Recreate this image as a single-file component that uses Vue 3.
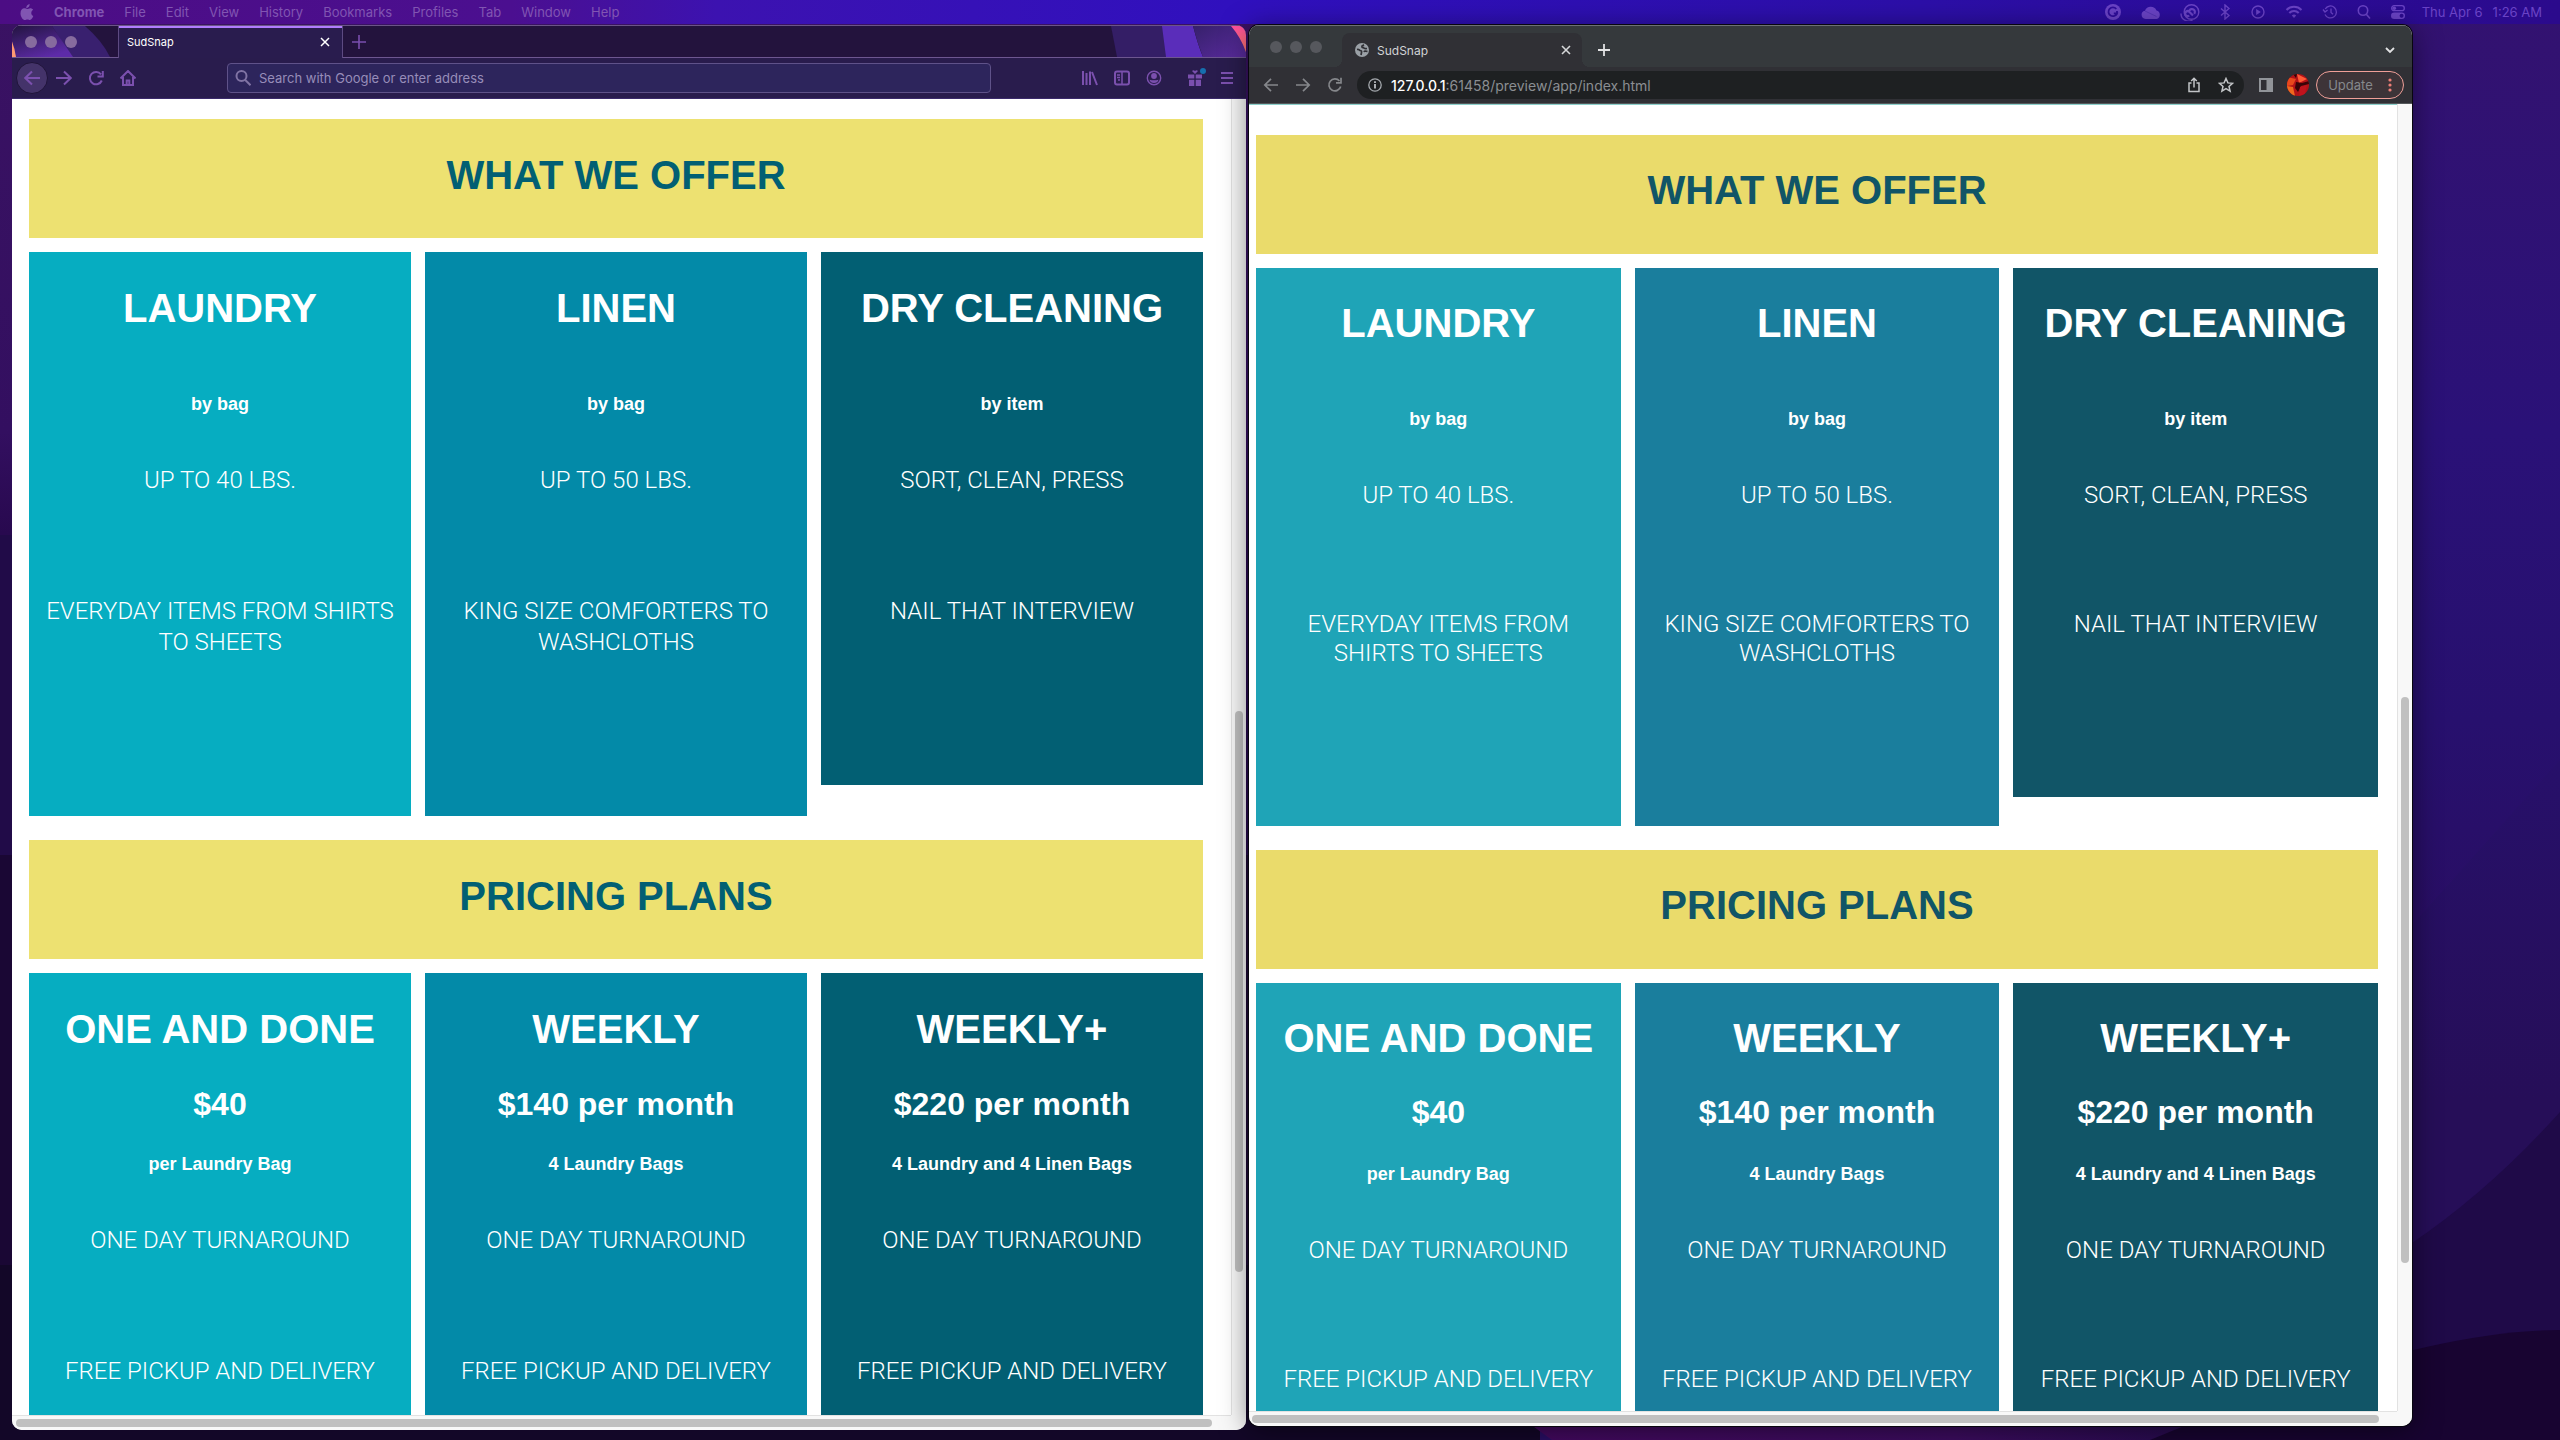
<script setup>
import { ref } from 'vue'

const menus = ['File', 'Edit', 'View', 'History', 'Bookmarks', 'Profiles', 'Tab', 'Window', 'Help']
const search = ref('')

const services = [
  { name: 'LAUNDRY', unit: 'by bag', lines: ['UP TO 40 LBS.', 'EVERYDAY ITEMS FROM SHIRTS TO SHEETS'] },
  { name: 'LINEN', unit: 'by bag', lines: ['UP TO 50 LBS.', 'KING SIZE COMFORTERS TO WASHCLOTHS'] },
  { name: 'DRY CLEANING', unit: 'by item', lines: ['SORT, CLEAN, PRESS', 'NAIL THAT INTERVIEW'] }
]

const plans = [
  { name: 'ONE AND DONE', price: '$40', unit: 'per Laundry Bag' },
  { name: 'WEEKLY', price: '$140 per month', unit: '4 Laundry Bags' },
  { name: 'WEEKLY+', price: '$220 per month', unit: '4 Laundry and 4 Linen Bags' }
].map((plan) => ({ ...plan, lines: ['ONE DAY TURNAROUND', 'FREE PICKUP AND DELIVERY'] }))

const sections = [
  { title: 'WHAT WE OFFER', cards: services },
  { title: 'PRICING PLANS', cards: plans }
]

// Scroll positions: share of the track before, under and after each thumb
const scroll = {
  firefox: { y: [612, 561, 143], x: [4, 1196, 19] },
  chrome: { y: [593, 566, 148], x: [3, 1127, 18] }
}
</script>

<template>
  <div class="desktop">
    <svg class="wallpaper" viewBox="0 0 2560 1440" preserveAspectRatio="none" aria-hidden="true">
      <defs>
        <linearGradient id="wp-left" x1="0" y1="0" x2="0" y2="1">
          <stop offset="0" stop-color="#3a1263" />
          <stop offset=".3" stop-color="#330f60" />
          <stop offset=".37" stop-color="#28094f" />
          <stop offset="1" stop-color="#1d0a46" />
        </linearGradient>
        <linearGradient id="wp-right" x1="0" y1="0" x2="0" y2="1">
          <stop offset="0" stop-color="#331270" />
          <stop offset=".3" stop-color="#2a1178" />
          <stop offset=".5" stop-color="#27106e" />
          <stop offset=".65" stop-color="#290e64" />
        </linearGradient>
        <linearGradient id="wp-hill" x1="0" y1="0" x2="0" y2="1">
          <stop offset="0" stop-color="#27106a" />
          <stop offset=".5" stop-color="#260e58" />
          <stop offset="1" stop-color="#260e58" />
        </linearGradient>
        <linearGradient id="wp-floor" x1="0" y1="0" x2="1" y2="0">
          <stop offset="0" stop-color="#43095f" />
          <stop offset=".6" stop-color="#3c0c5f" />
          <stop offset="1" stop-color="#230b4c" />
        </linearGradient>
      </defs>
      <rect width="1300" height="1440" fill="url(#wp-left)" />
      <rect x="1300" width="1260" height="1440" fill="url(#wp-right)" />
      <path d="M0 535h20v905H0z" fill="#210b48" />
      <path d="M0 855h1300v585H0z" fill="#1a0734" />
      <path d="M0 1265h1540v175H0z" fill="#130728" />
      <path d="M2300 975L2412 925 2560 760V1440H2300z" fill="url(#wp-hill)" />
      <path d="M2300 1290L2412 1243Q2490 1190 2560 1112V1440H2300z" fill="#1f0a48" />
      <path d="M1530 1424H2240L2180 1440H1552z" fill="url(#wp-floor)" />
      <path d="M2150 1440Q2412 1330 2560 1330V1440z" fill="#180431" />
    </svg>

    <header class="menubar">
      <nav class="menus" aria-label="Menu bar">
        <button class="apple" aria-label="Apple">
          <svg viewBox="0 0 14 17" width="14" height="17"><path fill="currentColor" d="M9.6 0c.1 1.3-.4 2.3-1 3-.7.8-1.500 1.200-2.300 1.100C6.200 2.900 6.700 2 7.300 1.300 7.900.6 8.800.1 9.600 0zM13.300 12.100c-.5 1.200-1.900 4-3.400 4-.9 0-1.400-.6-2.500-.6s-1.600.6-2.500.6C3.300 16.200.5 13.100.5 9.200.5 6 2.400 4.300 4.300 4.300c1.200 0 2.100.7 2.900.7.700 0 1.800-.8 3.200-.8.900 0 2 .5 2.700 1.500-2.600 1.600-2.200 5.300.2 6.400z" /></svg>
        </button>
        <button class="app-name">Chrome</button>
        <button v-for="menu in menus" :key="menu">{{ menu }}</button>
      </nav>
      <div class="status">
        <div class="status-icons">
          <svg viewBox="0 0 18 18" width="18" height="18"><circle cx="9" cy="9" r="8" fill="currentColor" /><path d="M12.300 6A4.400 4.400 0 1 0 13 10.400H9.800M13 8v3.500" fill="none" stroke="#2f0d9b" stroke-width="1.800" /></svg>
          <svg viewBox="0 0 20 16" width="20" height="16"><path fill="currentColor" d="M4.500 15a4.200 4.200 0 0 1-.6-8.300A6.300 6.300 0 0 1 15.500 6.500 4.400 4.400 0 0 1 15.600 15z" /><path d="M4 7l11.500 5.500" stroke="#5534b6" /></svg>
          <svg viewBox="0 0 20 17" width="20" height="17" fill="none" stroke="currentColor"><circle cx="11.500" cy="8" r="7.300" stroke-width="1.400" /><path d="M12.500 16A7.500 7.500 0 0 1 1 9.500" stroke-width="1.400" /><path d="M13 11.500L9.500 8a2.500 2.500 0 0 0-3.700 3.400 2.500 2.500 0 0 0 3.400.1M9.500 6.500a2.900 2.900 0 0 1 4.200-.8 2.900 2.900 0 0 1 .5 4.200" stroke-width="2.200" /></svg>
          <svg viewBox="0 0 12 16" width="12" height="16" fill="none" stroke="currentColor" stroke-width="1.400"><path d="M2 4.500l8 7L6 15V1l4 3.500-8 7" /></svg>
          <svg viewBox="0 0 16 16" width="16" height="16"><circle cx="8" cy="8" r="6" fill="none" stroke="currentColor" stroke-width="1.400" /><path d="M6.200 5v6l4.600-3z" fill="currentColor" /></svg>
          <svg viewBox="0 0 18 14" width="18" height="14" fill="none" stroke="currentColor" stroke-width="2"><path d="M1.500 5a10.500 10.500 0 0 1 15 0M4.300 8a6.500 6.500 0 0 1 9.400 0" /><path d="M6.800 10.500a3.200 3.200 0 0 1 4.400 0L9 13z" fill="currentColor" stroke="none" /></svg>
          <svg viewBox="0 0 16 16" width="16" height="16" fill="none" stroke="currentColor" stroke-width="1.300"><path d="M3.200 5A6 6 0 1 1 3 10.500M1 5.500l2 2.500 2.600-2M9 4.500V8.500l2 1.700" /></svg>
          <svg viewBox="0 0 14 16" width="14" height="16" fill="none" stroke="currentColor" stroke-width="1.600"><circle cx="6" cy="6.500" r="4.700" /><path d="M9.300 10.200l3.700 4.300" /></svg>
          <svg viewBox="0 0 16 16" width="16" height="16"><rect x="1.700" y="1.700" width="12.600" height="5" rx="2.500" fill="none" stroke="currentColor" stroke-width="1.300" /><circle cx="4.300" cy="4.200" r="1.800" fill="currentColor" /><rect x="1" y="8.500" width="14" height="6.500" rx="3.200" fill="currentColor" /><circle cx="11.600" cy="11.700" r="2" fill="#2c0a90" /></svg>
        </div>
        <time class="clock"><span>Thu Apr 6</span><span>1:26 AM</span></time>
      </div>
    </header>

    <main class="windows">
      <section class="window firefox" aria-label="Firefox">
        <div class="ff-tabs">
          <svg class="ff-art ff-art-left" viewBox="0 0 106 32" preserveAspectRatio="none" aria-hidden="true">
            <defs><linearGradient id="ffa" x1="0" y1="0" x2=".6" y2="1"><stop offset="0" stop-color="#231440" /><stop offset="1" stop-color="#5d2ba8" /></linearGradient></defs>
            <path d="M40 0H73Q90 15 98 32H60z" fill="#39206f" />
            <path d="M0 0H40L61 32H0z" fill="url(#ffa)" />
            <path d="M0 16Q3 24 4 32H0z" fill="#ff9a72" />
          </svg>
          <svg class="ff-art ff-art-right" viewBox="0 0 160 32" preserveAspectRatio="none" aria-hidden="true">
            <defs><linearGradient id="ffb" x1="0" y1="0" x2="1" y2="1"><stop offset="0" stop-color="#36206b" /><stop offset="1" stop-color="#5a2b9e" /></linearGradient><linearGradient id="ffc" x1="0" y1="0" x2="0" y2="1"><stop offset="0" stop-color="#ff4f9e" /><stop offset="1" stop-color="#ff7a68" /></linearGradient></defs>
            <path d="M25 0H80V32H31z" fill="#341e66" />
            <path d="M76 0H107Q112 20 117 32H80z" fill="#5a2dba" />
            <path d="M107 0H160V32H117Q111 16 107 0z" fill="url(#ffb)" />
            <path d="M145 0H160V27Q155 12 145 0z" fill="url(#ffc)" />
          </svg>
          <div class="lights"><i></i><i></i><i></i></div>
          <div class="ff-tab">
            <span>SudSnap</span>
            <button aria-label="Close tab"><svg viewBox="0 0 10 10" width="10" height="10"><path d="M1 1l8 8M9 1l-8 8" stroke="#fff" stroke-width="1.500" /></svg></button>
          </div>
          <button class="ff-new" aria-label="New tab"><svg viewBox="0 0 14 14" width="14" height="14"><path d="M7 0v14M0 7h14" stroke="#7a4fae" stroke-width="1.600" /></svg></button>
        </div>
        <div class="ff-nav">
          <button class="ff-back" aria-label="Back"><svg viewBox="0 0 16 16" width="16" height="16"><path d="M16 8H1M8 1.500L1.300 8 8 14.500" /></svg></button>
          <button aria-label="Forward"><svg viewBox="0 0 16 16" width="16" height="16"><path d="M0 8h15M8 1.500L14.700 8 8 14.500" /></svg></button>
          <button aria-label="Reload"><svg viewBox="0 0 16 16" width="16" height="16"><path d="M13.800 10.500A6.200 6.200 0 1 1 13 4.300M14.800 1v5.500H9.500" /></svg></button>
          <button aria-label="Home"><svg viewBox="0 0 16 16" width="16" height="16"><path d="M.5 8.500L8 1l7.500 7.500M3 7v8h10V7M6.700 15v-4.500h2.600V15" /></svg></button>
          <label class="ff-url">
            <svg viewBox="0 0 16 16" width="16" height="16"><circle cx="6.500" cy="6" r="5" /><path d="M10 9.800l5.500 5.400" /></svg>
            <input v-model="search" type="text" placeholder="Search with Google or enter address" aria-label="Search with Google or enter address" />
          </label>
          <div class="ff-tools">
            <button aria-label="Library"><svg viewBox="0 0 16 16" width="16" height="16"><path d="M1 1v14M4.500 3v12M8 1.500V15M10 2l5 13" /></svg></button>
            <button aria-label="Sidebars"><svg viewBox="0 0 16 16" width="16" height="16"><rect x="1" y="1.500" width="14" height="13" rx="2" /><path d="M8 1.500v13M3 5h3M3 7.500h3M4 10h2" stroke-width="1.500" /></svg></button>
            <button aria-label="Account"><svg viewBox="0 0 16 16" width="16" height="16"><circle cx="8" cy="8" r="6.700" stroke-width="1.400" /><circle cx="8" cy="6" r="2.900" fill="#7b50ae" stroke="none" /><path d="M3.500 9.700Q8 11 12.500 9.700 11.500 13 8 13T3.500 9.700z" fill="#7b50ae" stroke="none" /></svg></button>
            <button class="gift" aria-label="What's new"><svg viewBox="0 0 16 16" width="16" height="16"><path d="M1 4.500h6.300v4H1zM8.700 4.500H15v4H8.700zM2 9.700h5.300V16H2zM8.700 9.700H14V16H8.700zM8 4L5 1q1.500-1.500 3 0 1.500-1.500 3 0z" fill="#7b50ae" stroke="none" /></svg><i></i></button>
            <button aria-label="Menu"><svg viewBox="0 0 16 16" width="16" height="16"><path d="M2 3h12M2 8h12M2 13h12" /></svg></button>
          </div>
        </div>
        <div class="viewport">
          <div class="page">
            <template v-for="section in sections" :key="section.title">
              <h2 class="banner">{{ section.title }}</h2>
              <div class="cards">
                <article v-for="card in section.cards" :key="card.name" class="card">
                  <h2>{{ card.name }}</h2>
                  <h3 v-if="card.price">{{ card.price }}</h3>
                  <h4 :class="{ lone: !card.price }">{{ card.unit }}</h4>
                  <p v-for="line in card.lines" :key="line">{{ line }}</p>
                </article>
              </div>
            </template>
          </div>
          <div class="track-y">
            <span :style="{ flexGrow: scroll.firefox.y[0] }"></span><span class="thumb" :style="{ flexGrow: scroll.firefox.y[1] }"></span><span :style="{ flexGrow: scroll.firefox.y[2] }"></span>
          </div>
          <div class="track-x">
            <span :style="{ flexGrow: scroll.firefox.x[0] }"></span><span class="thumb" :style="{ flexGrow: scroll.firefox.x[1] }"></span><span :style="{ flexGrow: scroll.firefox.x[2] }"></span>
          </div>
          <div class="corner"></div>
        </div>
      </section>

      <section class="window chrome" aria-label="Chrome">
        <div class="ch-tabs">
          <div class="lights"><i></i><i></i><i></i></div>
          <div class="ch-tab">
            <svg viewBox="0 0 14 14" width="14" height="14"><circle cx="7" cy="7" r="7" fill="#9aa0a6" /><path d="M2 6.500Q4 6 5 7.500 7 7.500 6.500 9.500L6 12M12 5.500Q9 6 8.500 4.500 6.500 5 7 3L9 1.800M12.500 8.500Q9.500 7.500 9 9" fill="none" stroke="#303035" stroke-width="1.700" /></svg>
            <span>SudSnap</span>
            <button aria-label="Close tab"><svg viewBox="0 0 10 10" width="10" height="10"><path d="M1 1l8 8M9 1l-8 8" stroke="#d5d6d8" stroke-width="1.600" /></svg></button>
          </div>
          <button class="ch-new" aria-label="New tab"><svg viewBox="0 0 12 12" width="12" height="12"><path d="M6 0v12M0 6h12" stroke="#e2e3e4" stroke-width="1.800" /></svg></button>
          <button class="ch-list" aria-label="Search tabs"><svg viewBox="0 0 10 10" width="10" height="10"><path d="M1 3l4 4 4-4" fill="none" stroke="#e2e3e4" stroke-width="1.800" /></svg></button>
        </div>
        <div class="ch-nav">
          <button aria-label="Back"><svg viewBox="0 0 16 16" width="16" height="16"><path d="M15 8H2M8 1.800L1.800 8 8 14.200" /></svg></button>
          <button aria-label="Forward"><svg viewBox="0 0 16 16" width="16" height="16"><path d="M1 8h13M8 1.800L14.200 8 8 14.200" /></svg></button>
          <button aria-label="Reload"><svg viewBox="0 0 16 16" width="16" height="16"><path d="M13.700 9.500A6 6 0 1 1 12.500 4M14 .8v5H9" /></svg></button>
          <div class="ch-url">
            <svg viewBox="0 0 14 14" width="14" height="14"><circle cx="7" cy="7" r="6.200" fill="none" stroke="#a5a9ae" stroke-width="1.300" /><path d="M7 6v4.500M7 3.300v1.700" stroke="#c5c8cc" stroke-width="1.700" /></svg>
            <div class="address" role="textbox" aria-label="Address" contenteditable="true" spellcheck="false"><b>127.0.0.1</b>:61458/preview/app/index.html</div>
            <button aria-label="Share"><svg viewBox="0 0 14 16" width="14" height="16"><path d="M4.500 6H2v8.500h10V6H9.500M7 10.500V1.500M4.200 4L7 1.300 9.800 4" /></svg></button>
            <button aria-label="Bookmark"><svg viewBox="0 0 16 16" width="16" height="16"><path d="M8 1.500l1.900 4.400 4.600.4-3.500 3.200 1.100 4.700L8 11.700l-4.100 2.500L5 9.500 1.500 6.300l4.600-.4z" /></svg></button>
          </div>
          <button class="ch-panel" aria-label="Side panel"><svg viewBox="0 0 14 14" width="14" height="14"><path d="M0 0h14v14H0zM2 2v10h5.500V2z" fill="#919499" fill-rule="evenodd" stroke="none" /></svg></button>
          <button class="ch-avatar" aria-label="Profile">
            <svg viewBox="0 0 22 22" width="22" height="22"><defs><clipPath id="face"><circle cx="11" cy="11" r="11" /></clipPath></defs><g clip-path="url(#face)" stroke="none"><path d="M0 0h22v22H0z" fill="#b31217" /><path d="M0 3l9 2-3 6-6 1z" fill="#e8481c" /><path d="M10 0l10 5-8 4z" fill="#ff5a36" /><path d="M0 12l6 1 2 9H0z" fill="#f0691e" /><path d="M9 8l6 1 7-2v3l-8 2-3 6-3-4z" fill="#3a0408" /><path d="M13 13l7-2-2 9-6 2z" fill="#c0131d" /><path d="M6 0l3 4 1-4z" fill="#2c0608" /></g></svg>
          </button>
          <button class="ch-update">Update<svg viewBox="0 0 4 14" width="4" height="14"><circle cx="2" cy="2" r="1.600" /><circle cx="2" cy="7" r="1.600" /><circle cx="2" cy="12" r="1.600" /></svg></button>
        </div>
        <div class="viewport">
          <div class="page">
            <template v-for="section in sections" :key="section.title">
              <h2 class="banner">{{ section.title }}</h2>
              <div class="cards">
                <article v-for="card in section.cards" :key="card.name" class="card">
                  <h2>{{ card.name }}</h2>
                  <h3 v-if="card.price">{{ card.price }}</h3>
                  <h4 :class="{ lone: !card.price }">{{ card.unit }}</h4>
                  <p v-for="line in card.lines" :key="line">{{ line }}</p>
                </article>
              </div>
            </template>
          </div>
          <div class="track-y">
            <span :style="{ flexGrow: scroll.chrome.y[0] }"></span><span class="thumb" :style="{ flexGrow: scroll.chrome.y[1] }"></span><span :style="{ flexGrow: scroll.chrome.y[2] }"></span>
          </div>
          <div class="track-x">
            <span :style="{ flexGrow: scroll.chrome.x[0] }"></span><span class="thumb" :style="{ flexGrow: scroll.chrome.x[1] }"></span><span :style="{ flexGrow: scroll.chrome.x[2] }"></span>
          </div>
          <div class="corner"></div>
        </div>
      </section>
    </main>
  </div>
</template>

<style>
body {
  background: #2a1070;
}
</style>

<style scoped>
.desktop {
  position: relative;
  display: flex;
  flex-direction: column;
  height: 100vh;
  overflow: hidden;
  font-family: Inter, "Liberation Sans", sans-serif;
  font-size: 13px;
}
.desktop *,
.desktop {
  box-sizing: border-box;
}
.wallpaper {
  position: absolute;
  inset: 0;
  width: 100%;
  height: 100%;
}
button {
  display: flex;
  align-items: center;
  justify-content: center;
  margin: 0;
  padding: 0;
  border: 0;
  background: none;
  color: inherit;
  font: inherit;
}
svg {
  display: block;
  flex: none;
}

/* Menu bar */
.menubar {
  position: relative;
  display: flex;
  justify-content: space-between;
  align-items: center;
  height: 24px;
  padding: 0 18px 0 20px;
  background: linear-gradient(90deg, #4c0d84 0%, #4b0f90 20%, #3c12b0 28%, #3010be 48%, #2c0fa8 75%, #2b0a8c 100%);
}
.menus,
.status,
.status-icons {
  display: flex;
  align-items: center;
}
.menus {
  gap: 20px;
  color: #8155b2;
}
.app-name {
  font-weight: 700;
}
.status {
  gap: 16px;
  color: #6a43c6;
}
.status-icons {
  gap: 19px;
}
.clock {
  display: flex;
  gap: 10px;
}

/* Windows */
.windows {
  position: relative;
  flex: 1;
  min-height: 0;
  display: grid;
  grid-template-columns: 1234fr 1163fr 145fr;
  column-gap: 3px;
  padding: 1px 0 0 12px;
}
.window {
  position: relative;
  display: flex;
  flex-direction: column;
  min-width: 0;
  min-height: 0;
  overflow: hidden;
  border-radius: 10px;
  background: #fff;
}
.firefox {
  margin-bottom: 10px;
}
.chrome {
  margin-bottom: 14px;
  box-shadow: 0 0 0 1px #08060f, 0 4px 28px rgba(0, 0, 0, .5);
}
.lights {
  position: relative;
  display: flex;
  gap: 8px;
}
.lights i {
  width: 12px;
  height: 12px;
  border-radius: 50%;
  background: #56585d;
}

/* Firefox chrome */
.ff-tabs {
  position: relative;
  display: flex;
  align-items: stretch;
  height: 33px;
  border-top: 1px solid #6b5588;
  border-bottom: 1px solid #6d5690;
  background: #23133d;
}
.ff-art {
  position: absolute;
  top: 0;
  height: 100%;
}
.ff-art-left {
  left: 0;
  width: 106px;
}
.ff-art-right {
  right: 0;
  width: 160px;
}
.ff-tabs .lights {
  align-items: center;
  width: 106px;
  padding-left: 13px;
}
.ff-tabs .lights i {
  background: #866b9e;
}
.ff-tab {
  position: relative;
  display: flex;
  justify-content: space-between;
  align-items: center;
  width: 225px;
  margin-bottom: -1px;
  padding: 0 12px 0 8px;
  border: solid #5d4a82;
  border-width: 0 1px;
  background: #291c4e;
  box-shadow: inset 0 2px #b17cff;
  color: #fff;
  font-size: 11px;
}
.ff-new {
  width: 32px;
}
.ff-nav {
  display: flex;
  align-items: center;
  height: 41px;
  padding: 0 3px 0 4px;
  border-bottom: 1px solid #3b2a6b;
  background: #291c4d;
}
.ff-nav button {
  width: 32px;
  height: 32px;
}
.ff-nav svg {
  fill: none;
  stroke: #7b50ae;
  stroke-width: 2;
}
.ff-nav .ff-back {
  border: 1px solid #20143a;
  border-radius: 50%;
  background: #44336a;
}
.ff-url {
  display: flex;
  flex: 1;
  align-items: center;
  gap: 8px;
  height: 30px;
  margin: 0 83px;
  padding: 0 7px;
  border: 1px solid #5f5289;
  border-radius: 4px;
  background: #2d255c;
}
.ff-url svg {
  stroke: #8073a4;
}
.ff-url input {
  flex: 1;
  min-width: 0;
  padding: 0;
  border: 0;
  outline: 0;
  background: none;
  color: #fff;
  font: 13px Inter, sans-serif;
}
.ff-url input::placeholder {
  color: #978db9;
  opacity: 1;
}
.ff-tools {
  display: flex;
}
.ff-nav .gift {
  position: relative;
  margin-left: 9px;
}
.gift i {
  position: absolute;
  top: 6px;
  right: 5px;
  width: 6px;
  height: 6px;
  border-radius: 50%;
  background: #166fae;
}

/* Chrome chrome */
.ch-tabs {
  display: flex;
  align-items: flex-end;
  height: 42px;
  border-top: 1px solid #6d7173;
  background: #35393c;
}
.ch-tabs .lights {
  align-items: center;
  width: 93px;
  height: 41px;
  padding-left: 21px;
}
.ch-tab {
  position: relative;
  display: flex;
  align-items: center;
  gap: 8px;
  width: 240px;
  height: 34px;
  padding: 0 11px 0 13px;
  border-radius: 8px 8px 0 0;
  background: #303035;
  color: #d2d3d5;
  font-size: 12px;
}
.ch-tab::before,
.ch-tab::after {
  content: "";
  position: absolute;
  bottom: 0;
  width: 8px;
  height: 8px;
}
.ch-tab::before {
  left: -8px;
  background: radial-gradient(circle at 0 0, transparent 8px, #303035 8px);
}
.ch-tab::after {
  right: -8px;
  background: radial-gradient(circle at 100% 0, transparent 8px, #303035 8px);
}
.ch-tab button {
  margin-left: auto;
}
.ch-new,
.ch-list {
  width: 44px;
  height: 34px;
}
.ch-list {
  margin-left: auto;
}
.ch-nav {
  display: flex;
  align-items: center;
  height: 37px;
  padding: 0 8px 0 6px;
  border-bottom: 1px solid #55585b;
  background: #303035;
}
.ch-nav svg {
  fill: none;
  stroke: #85878b;
  stroke-width: 1.700;
}
.ch-nav button {
  width: 32px;
  height: 28px;
}
.ch-url {
  display: flex;
  flex: 1;
  align-items: center;
  height: 28px;
  margin-left: 6px;
  padding: 0 2px 0 11px;
  border-radius: 14px;
  background: #1e2022;
}
.ch-url button svg {
  stroke: #c2c4c7;
  stroke-width: 1.500;
}
.address {
  flex: 1;
  min-width: 0;
  padding-left: 9px;
  outline: 0;
  color: #8b8e92;
  font-size: 14px;
  white-space: nowrap;
}
.address b {
  color: #fff;
  font-weight: 500;
}
.ch-nav .ch-panel {
  margin-left: 6px;
}
.ch-nav .ch-update {
  gap: 15px;
  width: 88px;
  margin-left: 2px;
  border: 1px solid #ef9f98;
  border-radius: 14px;
  background: #3d3438;
  color: #85888c;
}
.ch-update svg {
  fill: #ee7f77;
  stroke: none;
}

/* Scrolling area */
.viewport {
  flex: 1;
  min-height: 0;
  display: grid;
  grid-template-columns: minmax(0, 1fr) 15px;
  grid-template-rows: minmax(0, 1fr) 15px;
}
.track-y,
.track-x,
.corner {
  display: flex;
  background: #f8f8f8;
}
.track-y {
  flex-direction: column;
  padding: 0 3px;
  border-left: 1px solid #e2e2e2;
}
.track-x {
  padding: 3px 0;
  border-top: 1px solid #e2e2e2;
}
.track-y span,
.track-x span {
  flex-basis: 0;
}
.thumb {
  border-radius: 4px;
  background: #c0c0c0;
}

/* SudSnap page */
.page {
  overflow: hidden;
  padding: var(--top) var(--right) 0 var(--left);
  color: #fff;
  font-family: "Liberation Sans", Arial, sans-serif;
  text-align: center;
}
.firefox .page {
  --top: 20px;
  --right: 28px;
  --left: 17px;
  --yellow: #ede171;
  --aqua: #06adc1;
  --blue: #038aa8;
  --deep: #025f73;
  --title-line: 48px;
  --title-gap: 61px;
  --price-gap: 30px;
  --unit-gap: 50px;
  --text-line: 31px;
}
.chrome .page {
  --top: 30px;
  --right: 19px;
  --left: 7px;
  --yellow: #eadb6b;
  --aqua: #1fa4b7;
  --blue: #1a7e9d;
  --deep: #115567;
  --title-line: 46px;
  --title-gap: 62px;
  --price-gap: 32px;
  --unit-gap: 51px;
  --text-line: 29px;
  border-top: 1px solid #8cd0cb;
}
h2,
h3,
h4,
p {
  margin: 0;
}
h2 {
  font-size: 40px;
  line-height: var(--title-line);
}
.banner {
  min-height: 119px;
  padding-top: 32px;
  background: var(--yellow);
  color: var(--deep);
}
.cards {
  display: grid;
  grid-template-columns: repeat(3, minmax(0, 1fr));
  align-items: start;
  gap: 14px;
  margin: 14px 0 24px;
}
.card {
  padding: 32px 12px 158px;
  background: var(--aqua);
}
.card:nth-child(2) {
  background: var(--blue);
}
.card:nth-child(3) {
  background: var(--deep);
}
h3 {
  margin-top: 32px;
  font-size: 32px;
  line-height: 38px;
}
h4 {
  margin: var(--price-gap) 0 var(--unit-gap);
  font-size: 18px;
  line-height: 22px;
}
h4.lone {
  margin-top: var(--title-gap);
}
p {
  font-family: Roboto, "Liberation Sans", sans-serif;
  font-size: 24px;
  font-weight: 300;
  line-height: var(--text-line);
}
p + p {
  margin-top: 100px;
}
</style>
